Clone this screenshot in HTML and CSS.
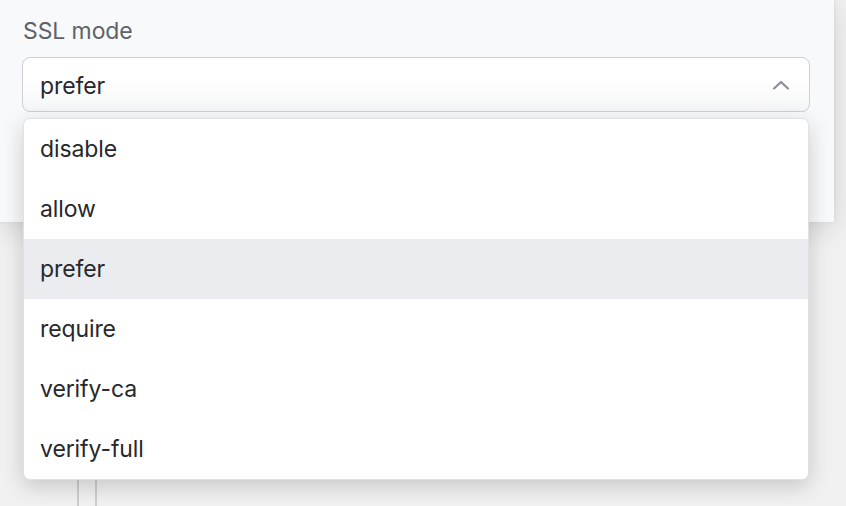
FILE: index.html
```html
<!DOCTYPE html>
<html>
<head>
<meta charset="utf-8">
<link rel="stylesheet" href="styles.css">
</head>
<body>
<div class="page">
  <div class="col"></div>
</div>
<div class="panel">
  <div class="field">
    <div class="label">SSL mode</div>
    <div class="select">
      <span class="value">prefer</span>
      <svg class="chev" width="18" height="12" viewBox="0 0 18 12"><path d="M2 9.5 L9 3 L16 9.5" fill="none" stroke="#8b9097" stroke-width="2.2" stroke-linecap="round" stroke-linejoin="round"/></svg>
    </div>
    <ul class="menu">
      <li class="opt">disable</li>
      <li class="opt">allow</li>
      <li class="opt active">prefer</li>
      <li class="opt">require</li>
      <li class="opt">verify-ca</li>
      <li class="opt">verify-full</li>
    </ul>
  </div>
</div>
</body>
</html>
```
FILE: styles.css
```css
html, body {
  margin: 0;
  padding: 0;
}
body {
  width: 846px;
  height: 506px;
  overflow: hidden;
  position: relative;
  background: #f1f1f2;
  font-family: Inter, "Noto Sans", sans-serif;
}
.page {
  height: 506px;
  padding-left: 77px;
  box-sizing: border-box;
  display: flex;
}
.col {
  width: 16px;
  height: 100%;
  border-left: 2px solid #cbcdd1;
  border-right: 2px solid #cbcdd1;
}
.panel {
  position: absolute;
  left: 0;
  top: 0;
  width: 834px;
  height: 222px;
  background: #f8f9fa;
  box-shadow: 0 6px 28px rgba(0, 0, 0, 0.13), 1px 0 3px rgba(0,0,0,0.06);
  padding: 17px 24px 0 22px;
  box-sizing: border-box;
}
.field {
  position: relative;
}
.label {
  font-size: 23px;
  line-height: 28px;
  color: #5e6268;
  padding-left: 1px;
  margin-bottom: 12px;
  letter-spacing: -0.1px;
}
.select {
  height: 55px;
  box-sizing: border-box;
  border: 1.5px solid #cdd0d5;
  border-radius: 8px;
  background: linear-gradient(#ffffff 40%, #f5f6f7);
  display: flex;
  align-items: center;
  justify-content: space-between;
  padding: 0 19px 0 17px;
}
.value {
  font-size: 23px;
  color: #27282b;
  padding-top: 3px;
  letter-spacing: -0.1px;
}
.chev {
  display: block;
}
.menu {
  position: absolute;
  left: 1px;
  top: 101px;
  width: 786px;
  margin: 0;
  padding: 0;
  list-style: none;
  background: #ffffff;
  border: 1px solid #dfe1e5;
  border-radius: 7px;
  box-shadow: 0 6px 22px rgba(0, 0, 0, 0.18);
  overflow: hidden;
  box-sizing: border-box;
}
.opt {
  height: 60px;
  display: flex;
  align-items: center;
  padding-left: 16px;
  font-size: 23px;
  color: #27282b;
  letter-spacing: -0.1px;
}
.opt.active {
  background: #ebecef;
}
```
